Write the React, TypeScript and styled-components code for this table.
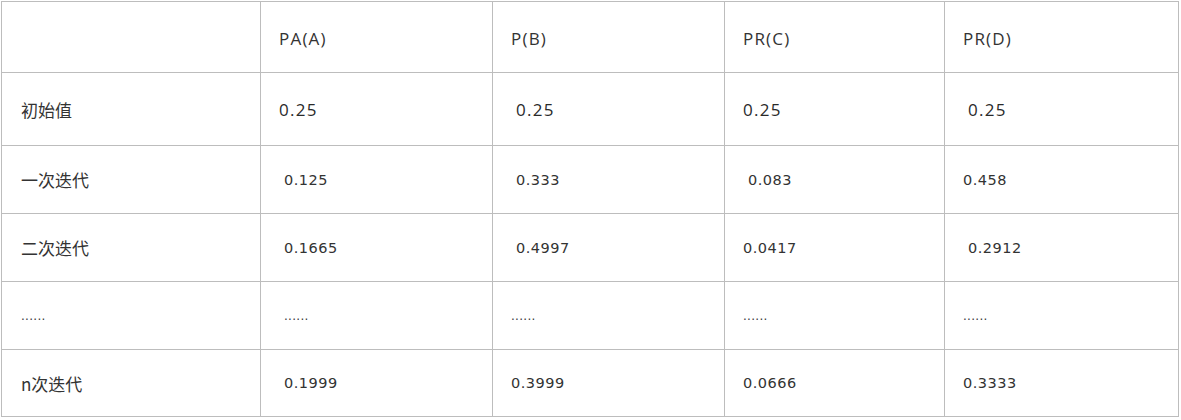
import React from "react";
import styled, { createGlobalStyle } from "styled-components";

const Global = createGlobalStyle`
  html, body { margin: 0; padding: 0; background: #ffffff; }
  body { font-family: "Open Sans", "Noto Sans CJK SC", sans-serif; color: #333333; }
`;

const Wrap = styled.div`
  padding: 1px 0 0 1px;
`;

const Table = styled.table`
  border-collapse: collapse;
  table-layout: fixed;
  width: 1177px;
`;

const Col = styled.col<{ $w: number }>`
  width: ${(p) => p.$w}px;
`;

const Row = styled.tr<{ $h: number }>`
  height: ${(p) => p.$h}px;
`;

type Kind = "head" | "label" | "init" | "data" | "dots";

const fonts: Record<Kind, string> = {
  head: `font-family: "Open Sans", sans-serif; font-size: 17px; letter-spacing: 1.2px; padding-top: 3px;`,
  label: `font-family: "Noto Sans CJK SC", sans-serif; font-size: 17px;`,
  init: `font-family: "Open Sans", sans-serif; font-size: 17px; letter-spacing: 1.3px; font-weight: 500; color: #2a2a2a;`,
  data: `font-family: "DejaVu Sans", sans-serif; font-size: 14.5px; letter-spacing: 0.5px;`,
  dots: `font-family: "DejaVu Sans", sans-serif; font-size: 12px; color: #3a3a3a; letter-spacing: 0.3px;`,
};

const Cell = styled.td<{ $kind: Kind; $indent?: number }>`
  border: 1px solid #bdbdbd;
  padding: 0 0 0 ${(p) => 18 + (p.$indent ?? 0)}px;
  vertical-align: middle;
  white-space: nowrap;
  color: #333333;
  ${(p) => fonts[p.$kind]}
`;

type C = [string, number?];

const header: C[] = [["PA(A)"], ["P(B)"], ["PR(C)"], ["PR(D)"]];

const rows: { label: string; kind: Kind; labelKind: Kind; h: number; cells: C[] }[] = [
  { label: "初始值", labelKind: "label", kind: "init", h: 73, cells: [["0.25"], ["0.25", 5], ["0.25"], ["0.25", 5]] },
  { label: "一次迭代", labelKind: "label", kind: "data", h: 68, cells: [["0.125", 5], ["0.333", 5], ["0.083", 5], ["0.458"]] },
  { label: "二次迭代", labelKind: "label", kind: "data", h: 68, cells: [["0.1665", 5], ["0.4997", 5], ["0.0417"], ["0.2912", 5]] },
  { label: "......", labelKind: "dots", kind: "dots", h: 68, cells: [["......", 5], ["......"], ["......"], ["......"]] },
  { label: "n次迭代", labelKind: "label", kind: "data", h: 67, cells: [["0.1999", 5], ["0.3999"], ["0.0666"], ["0.3333"]] },
];

export default function App() {
  return (
    <>
      <Global />
      <Wrap>
        <Table>
          <colgroup>
            <Col $w={259} />
            <Col $w={232} />
            <Col $w={232} />
            <Col $w={220} />
            <Col $w={234} />
          </colgroup>
          <tbody>
            <Row $h={71}>
              <Cell $kind="head" />
              {header.map(([t], i) => (
                <Cell key={i} $kind="head">{t}</Cell>
              ))}
            </Row>
            {rows.map((r) => (
              <Row key={r.label + r.h} $h={r.h}>
                <Cell $kind={r.labelKind} $indent={1}>{r.label}</Cell>
                {r.cells.map(([t, ind], i) => (
                  <Cell key={i} $kind={r.kind} $indent={ind}>{t}</Cell>
                ))}
              </Row>
            ))}
          </tbody>
        </Table>
      </Wrap>
    </>
  );
}
